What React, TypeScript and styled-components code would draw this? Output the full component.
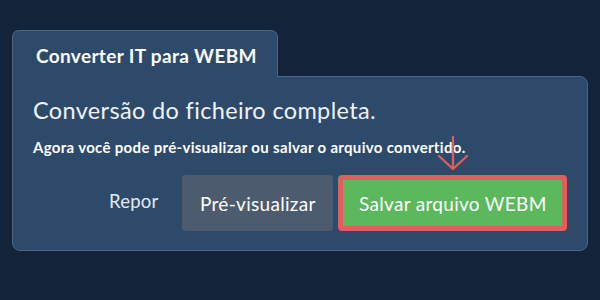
import React from "react";
import styled, { createGlobalStyle } from "styled-components";

const Global = createGlobalStyle`
  html, body { margin: 0; padding: 0; background: #132339; }
  body { font-family: Lato, "Open Sans", sans-serif; }
`;

const Page = styled.div`
  width: 600px;
  height: 300px;
  box-sizing: border-box;
  padding: 30px 12px 0 12px;
  background: #132339;
`;

const Wrap = styled.div`
  width: 576px;
  display: flex;
  flex-direction: column;
`;

const Tab = styled.div`
  width: 266px;
  height: 47px;
  box-sizing: border-box;
  background: #2e4a6a;
  border: 1px solid #4a6585;
  border-bottom: none;
  border-radius: 7px 7px 0 0;
  color: #fff;
  font-weight: 700;
  font-size: 19px;
  letter-spacing: 0.35px;
  display: flex;
  align-items: center;
  padding-left: 23px;
  padding-top: 2px;
  position: relative;
  z-index: 1;
  margin-bottom: -1px;
`;

const Panel = styled.div`
  height: 175px;
  box-sizing: border-box;
  background: #2e4a6a;
  border: 1px solid #4a6585;
  border-radius: 0 8px 8px 8px;
  padding: 18px 0 0 20px;
  position: relative;
  display: flex;
  flex-direction: column;
`;

const Title = styled.div`
  color: #eef2f6;
  font-size: 23.5px;
  letter-spacing: 0.35px;
  line-height: 30px;
`;

const Sub = styled.div`
  color: #fff;
  font-size: 15px;
  font-weight: 700;
  letter-spacing: 0.32px;
  line-height: 20px;
  margin-top: 12px;
`;

const Actions = styled.div`
  display: flex;
  align-items: center;
  gap: 5px;
  margin-top: 18px;
  margin-left: 76px;
`;

const LinkBtn = styled.div`
  flex-shrink: 0;
  color: #e4e9ef;
  font-size: 18.5px;
  letter-spacing: 0.2px;
  margin-right: 19px;
  margin-top: -5px;
`;

const Btn = styled.div<{ $variant: "grey" | "green" }>`
  flex-shrink: 0;
  height: 56px;
  box-sizing: border-box;
  display: flex;
  align-items: center;
  justify-content: center;
  font-size: 19px;
  letter-spacing: 0.3px;
  color: #fff;
  border-radius: 4px;
  background: ${(p) => (p.$variant === "green" ? "#5cb85c" : "#4c5c6e")};
  border: ${(p) => (p.$variant === "green" ? "5px solid #e05e5e" : "none")};
  width: ${(p) => (p.$variant === "green" ? "229px" : "151px")};
`;

const Arrow = styled.svg`
  position: absolute;
  left: 424px;
  top: 59px;
`;

export default function App() {
  return (
    <Page>
      <Global />
      <Wrap>
        <Tab>Converter IT para WEBM</Tab>
        <Panel>
          <Title>Conversão do ficheiro completa.</Title>
          <Sub>Agora você pode pré-visualizar ou salvar o arquivo convertido.</Sub>
          <Actions>
            <LinkBtn>Repor</LinkBtn>
            <Btn $variant="grey">Pré-visualizar</Btn>
            <Btn $variant="green">Salvar arquivo WEBM</Btn>
          </Actions>
          <Arrow width="32" height="36" viewBox="0 0 32 36">
            <path
              d="M16 1 V33 M2 20 L16 33 L30 20"
              fill="none"
              stroke="#e05e5e"
              strokeWidth="2.2"
              strokeLinecap="round"
              strokeLinejoin="round"
            />
          </Arrow>
        </Panel>
      </Wrap>
    </Page>
  );
}
